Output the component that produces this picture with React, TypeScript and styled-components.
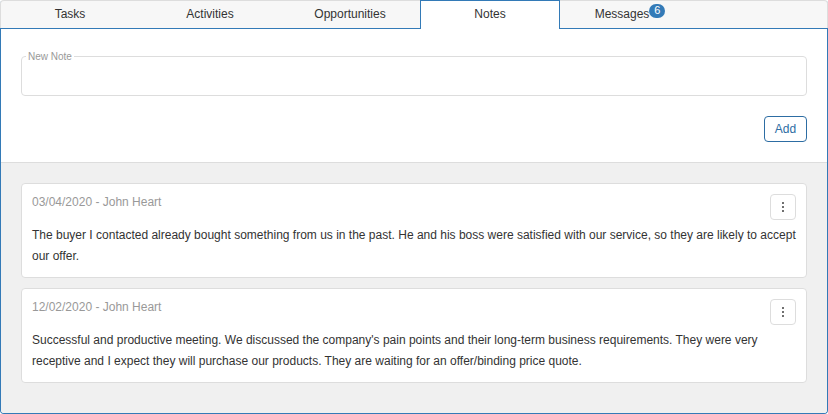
import React from "react";
import styled, { createGlobalStyle, css } from "styled-components";

const blue = "#337ab7";
const darkBlue = "#2d6da3";

const GlobalStyle = createGlobalStyle`
  * { box-sizing: border-box; }
  body { margin: 0; background: #fff; color: #333; font: 12px/1.35715 "Liberation Sans", Arial, sans-serif; }
`;

const Panel = styled.div`
  width: 828px;
  height: 414px;
  display: flex;
  flex-direction: column;
`;

const Tabs = styled.div`
  display: flex;
  height: 29px;
  flex: none;
  background: #f7f7f7;
  border-radius: 4px 4px 0 0;
  box-shadow: inset 0 -1px ${blue}, inset 0 0 0 1px #ddd;
`;

const Tab = styled.div<{ $active?: boolean }>`
  width: 140px;
  height: 29px;
  display: flex;
  justify-content: center;
  line-height: 16px;
  padding-top: 6px;
  ${(p) => p.$active && css`
    background: #fff;
    border: 1px solid ${blue};
    border-bottom: 0;
    padding-top: 5px;
  `}
`;

const Badge = styled.span`
  width: 16px;
  height: 14px;
  margin-top: -2px;
  border-radius: 7px;
  background: ${blue};
  color: #fff;
  font-size: 11px;
  line-height: 12px;
  text-align: center;
`;

const Content = styled.div`
  flex: 1;
  display: flex;
  flex-direction: column;
  border: 1px solid ${blue};
  border-top: 0;
  border-radius: 0 0 4px 4px;
  overflow: hidden;
`;

const Form = styled.div`
  height: 134px;
  flex: none;
  padding: 20px;
  display: flex;
  flex-direction: column;
  align-items: flex-end;
  justify-content: space-between;
  border-bottom: 1px solid #ddd;
`;

const Field = styled.fieldset`
  width: 100%;
  height: 47px;
  margin: 0;
  padding: 0 4px;
  border: 1px solid #ddd;
  border-radius: 4px;
`;

const Legend = styled.legend`
  padding: 0 2px;
  font-size: 10px;
  line-height: 15px;
  color: #999;
`;

const AddButton = styled.button`
  width: 43px;
  height: 26px;
  padding: 0;
  border: 1px solid ${darkBlue};
  border-radius: 4px;
  background: #fff;
  color: ${darkBlue};
  font: inherit;
`;

const NoteList = styled.div`
  flex: 1;
  padding: 20px;
  display: flex;
  flex-direction: column;
  gap: 10px;
  background: #f0f0f0;
`;

const Card = styled.article`
  height: 95px;
  padding: 10px;
  border: 1px solid #ddd;
  border-radius: 4px;
  background: #fff;
`;

const CardHeader = styled.div`
  display: flex;
  justify-content: space-between;
  height: 31px;
  color: #999;
`;

const MenuButton = styled.button`
  width: 26px;
  height: 26px;
  padding: 0;
  display: flex;
  align-items: center;
  justify-content: center;
  border: 1px solid #ddd;
  border-radius: 4px;
  background: #fff;
`;

const NoteText = styled.p`
  margin: 0;
  line-height: 21px;
`;

const tabs = ["Tasks", "Activities", "Opportunities", "Notes", "Messages"];

const notes = [
  { by: "03/04/2020 - John Heart", text: "The buyer I contacted already bought something from us in the past. He and his boss were satisfied with our service, so they are likely to accept our offer." },
  { by: "12/02/2020 - John Heart", text: "Successful and productive meeting. We discussed the company's pain points and their long-term business requirements. They were very receptive and I expect they will purchase our products. They are waiting for an offer/binding price quote." },
];

const Dots = () => (
  <svg width="14" height="14" viewBox="0 0 14 14" fill="#333">
    <circle cx="7" cy="3" r="0.95" />
    <circle cx="7" cy="7" r="0.95" />
    <circle cx="7" cy="11" r="0.95" />
  </svg>
);

export default function App() {
  return (
    <>
      <GlobalStyle />
      <Panel>
        <Tabs>
          {tabs.map((t) => (
            <Tab key={t} $active={t === "Notes"}>
              {t}
              {t === "Messages" && <Badge>6</Badge>}
            </Tab>
          ))}
        </Tabs>
        <Content>
          <Form>
            <Field><Legend>New Note</Legend></Field>
            <AddButton>Add</AddButton>
          </Form>
          <NoteList>
            {notes.map((n) => (
              <Card key={n.by}>
                <CardHeader>
                  <span>{n.by}</span>
                  <MenuButton aria-label="Note actions"><Dots /></MenuButton>
                </CardHeader>
                <NoteText>{n.text}</NoteText>
              </Card>
            ))}
          </NoteList>
        </Content>
      </Panel>
    </>
  );
}
